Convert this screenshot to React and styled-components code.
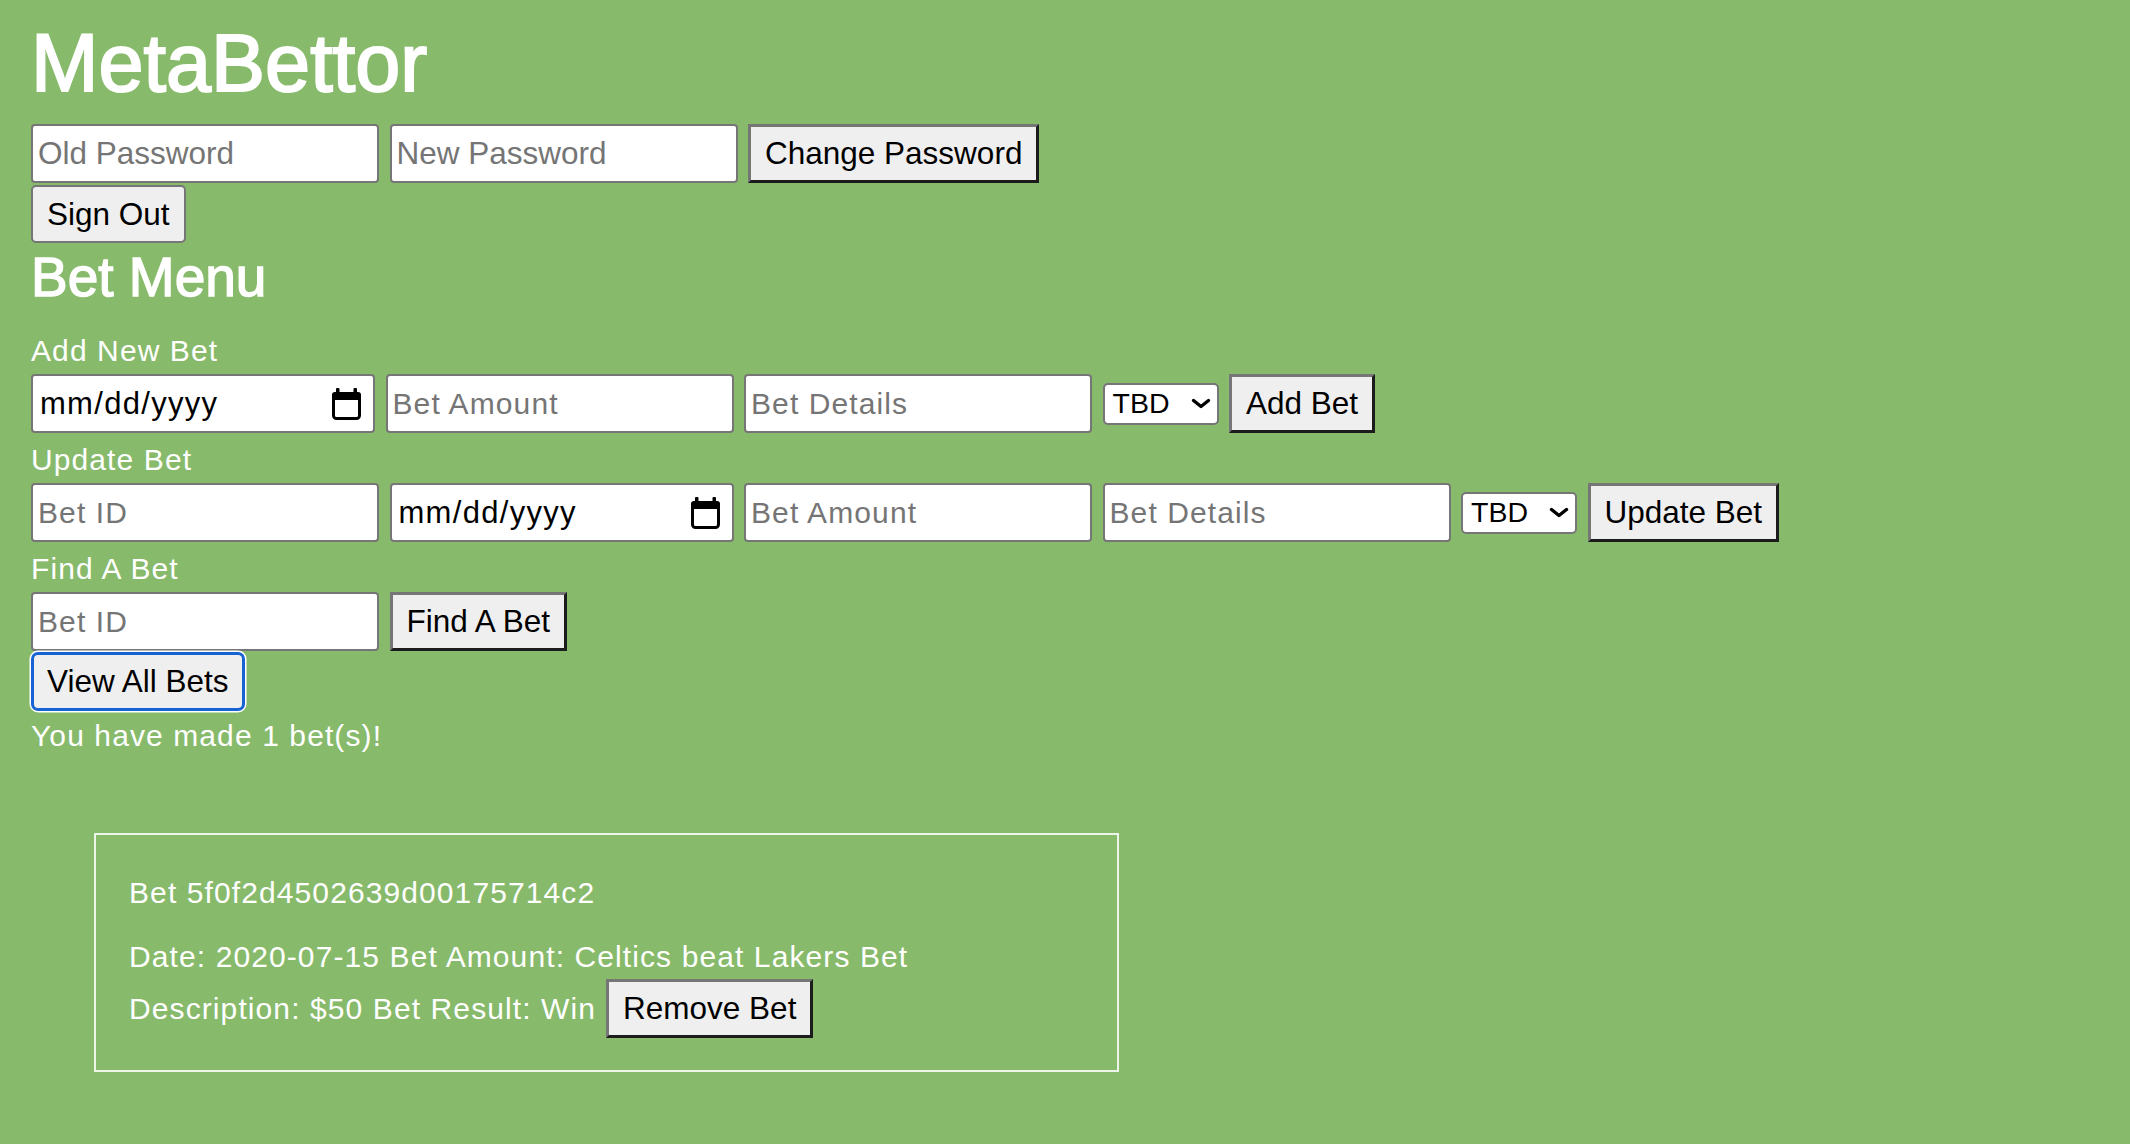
import React from "react";
import styled, { createGlobalStyle, css } from "styled-components";

const GlobalStyle = createGlobalStyle`
  * {
    box-sizing: border-box;
  }

  html,
  body {
    margin: 0;
    padding: 0;
    background: #87ba6b;
  }

  body {
    font-family: "Liberation Sans", Arial, sans-serif;
    color: #fff;
  }
`;

const Page = styled.div`
  min-height: 1144px;
  padding: 15px 31px 40px;
  display: flex;
  flex-direction: column;
  align-items: flex-start;
`;

/* HEADINGS */
const Title = styled.h1`
  margin: 0 0 13px;
  font-size: 81px;
  line-height: 96px;
  font-weight: 400;
  -webkit-text-stroke: 2px #fff;
`;

const SectionTitle = styled.h2`
  margin: 2px 0 0;
  font-size: 55px;
  line-height: 65px;
  font-weight: 400;
  -webkit-text-stroke: 1.4px #fff;
`;

const Label = styled.div`
  margin-top: ${(p) => p.$top || 0}px;
  font-size: 30px;
  line-height: 40px;
  letter-spacing: 1.1px;
`;

/* FORM ROWS */
const Row = styled.div`
  display: flex;
  align-items: center;
  gap: 10.5px;
  margin-top: ${(p) => (p.$top === undefined ? 3 : p.$top)}px;
`;

const TextInput = styled.input`
  width: ${(p) => p.$w || 348}px;
  height: 59px;
  padding: 0 5px;
  border: 2px solid #767676;
  border-radius: 4px;
  background: #fff;
  color: #000;
  outline: none;
  font-family: "Liberation Sans", Arial, sans-serif;
  ${(p) =>
    p.$large
      ? css`
          font-size: 31.5px;
        `
      : css`
          font-size: 30px;
          letter-spacing: 1.1px;
        `}

  &::placeholder {
    color: #757575;
  }
`;

const DateField = styled.label`
  width: 344px;
  height: 59px;
  display: flex;
  align-items: center;
  justify-content: space-between;
  padding: 0 12px 0 7px;
  border: 2px solid #767676;
  border-radius: 4px;
  background: #fff;
  color: #000;
  font-size: 31px;
  letter-spacing: 1.3px;
`;

const SelectBox = styled.div`
  width: ${(p) => p.$w || 116}px;
  height: 42px;
  display: flex;
  align-items: center;
  justify-content: space-between;
  padding: 0 6px 0 8px;
  border: 2px solid #767676;
  border-radius: 5px;
  background: #fff;
  color: #000;
  font-size: 28.5px;
`;

const Button = styled.button`
  height: ${(p) => p.$h || 59}px;
  padding: 0 14px;
  background: #efefef;
  color: #000;
  font-family: "Liberation Sans", Arial, sans-serif;
  font-size: 31.5px;
  white-space: nowrap;
  cursor: pointer;
  outline: none;
  ${(p) =>
    p.$outset
      ? css`
          border-width: 3px;
          border-style: solid;
          border-color: #767676 #1c1c1c #1c1c1c #767676;
          border-radius: 0;
        `
      : css`
          border: 2px solid #767676;
          border-radius: 5px;
        `}
  ${(p) =>
    p.$focused &&
    css`
      border: 3px solid #1763d4;
      border-radius: 7px;
      padding: 0 13px;
      box-shadow: 0 0 0 1.5px #fff;
    `}
`;

const Status = styled.div`
  margin-top: 5px;
  font-size: 30px;
  line-height: 40px;
  letter-spacing: 1.1px;
`;

/* BET CARD */
const BetCard = styled.div`
  margin: 77px 0 0 63px;
  width: 1025px;
  padding: 38px 33px 32px;
  border: 2px solid rgba(255, 255, 255, 0.85);
`;

const CardLine = styled.div`
  margin-top: ${(p) => p.$top || 0}px;
  font-size: 30px;
  line-height: 40px;
  letter-spacing: 1.1px;
`;

const CardActions = styled.div`
  display: flex;
  align-items: center;
  gap: 10px;
  margin-top: 2px;
  font-size: 30px;
  line-height: 40px;
  letter-spacing: 1.1px;
`;

const CalendarIcon = () => (
  <svg width="29" height="32" viewBox="0 0 29 32" aria-hidden="true">
    <rect x="1.5" y="5.5" width="26" height="25" rx="3" fill="none" stroke="#000" strokeWidth="3" />
    <rect x="0" y="4" width="29" height="8" rx="3" fill="#000" />
    <rect x="4" y="0" width="3.5" height="7" rx="1" fill="#000" />
    <rect x="21.5" y="0" width="3.5" height="7" rx="1" fill="#000" />
  </svg>
);

const Chevron = () => (
  <svg width="20" height="11" viewBox="0 0 20 11" aria-hidden="true">
    <polyline
      points="2.5,2.5 10,8.5 17.5,2.5"
      fill="none"
      stroke="#000"
      strokeWidth="3.4"
      strokeLinecap="round"
      strokeLinejoin="round"
    />
  </svg>
);

const DateInput = () => (
  <DateField>
    <span>mm/dd/yyyy</span>
    <CalendarIcon />
  </DateField>
);

const ResultSelect = () => (
  <SelectBox>
    <span>TBD</span>
    <Chevron />
  </SelectBox>
);

const App = () => {
  return (
    <>
      <GlobalStyle />
      <Page>
        <Title>MetaBettor</Title>

        <Row $top={0}>
          <TextInput $large placeholder="Old Password" />
          <TextInput $large placeholder="New Password" />
          <Button $outset>Change Password</Button>
        </Row>
        <Row $top={2}>
          <Button $h={58}>Sign Out</Button>
        </Row>

        <SectionTitle>Bet Menu</SectionTitle>

        <Label $top={21}>Add New Bet</Label>
        <Row>
          <DateInput />
          <TextInput placeholder="Bet Amount" />
          <TextInput placeholder="Bet Details" />
          <ResultSelect />
          <Button $outset>Add Bet</Button>
        </Row>

        <Label $top={7}>Update Bet</Label>
        <Row>
          <TextInput placeholder="Bet ID" />
          <DateInput />
          <TextInput placeholder="Bet Amount" />
          <TextInput placeholder="Bet Details" />
          <ResultSelect />
          <Button $outset>Update Bet</Button>
        </Row>

        <Label $top={7}>Find A Bet</Label>
        <Row>
          <TextInput placeholder="Bet ID" />
          <Button $outset>Find A Bet</Button>
        </Row>
        <Row $top={1}>
          <Button $focused>View All Bets</Button>
        </Row>

        <Status>You have made 1 bet(s)!</Status>

        <BetCard>
          <CardLine>Bet 5f0f2d4502639d00175714c2</CardLine>
          <CardLine $top={24}>Date: 2020-07-15 Bet Amount: Celtics beat Lakers Bet</CardLine>
          <CardActions>
            <span>Description: $50 Bet Result: Win</span>
            <Button $outset>Remove Bet</Button>
          </CardActions>
        </BetCard>
      </Page>
    </>
  );
};

export default App;
